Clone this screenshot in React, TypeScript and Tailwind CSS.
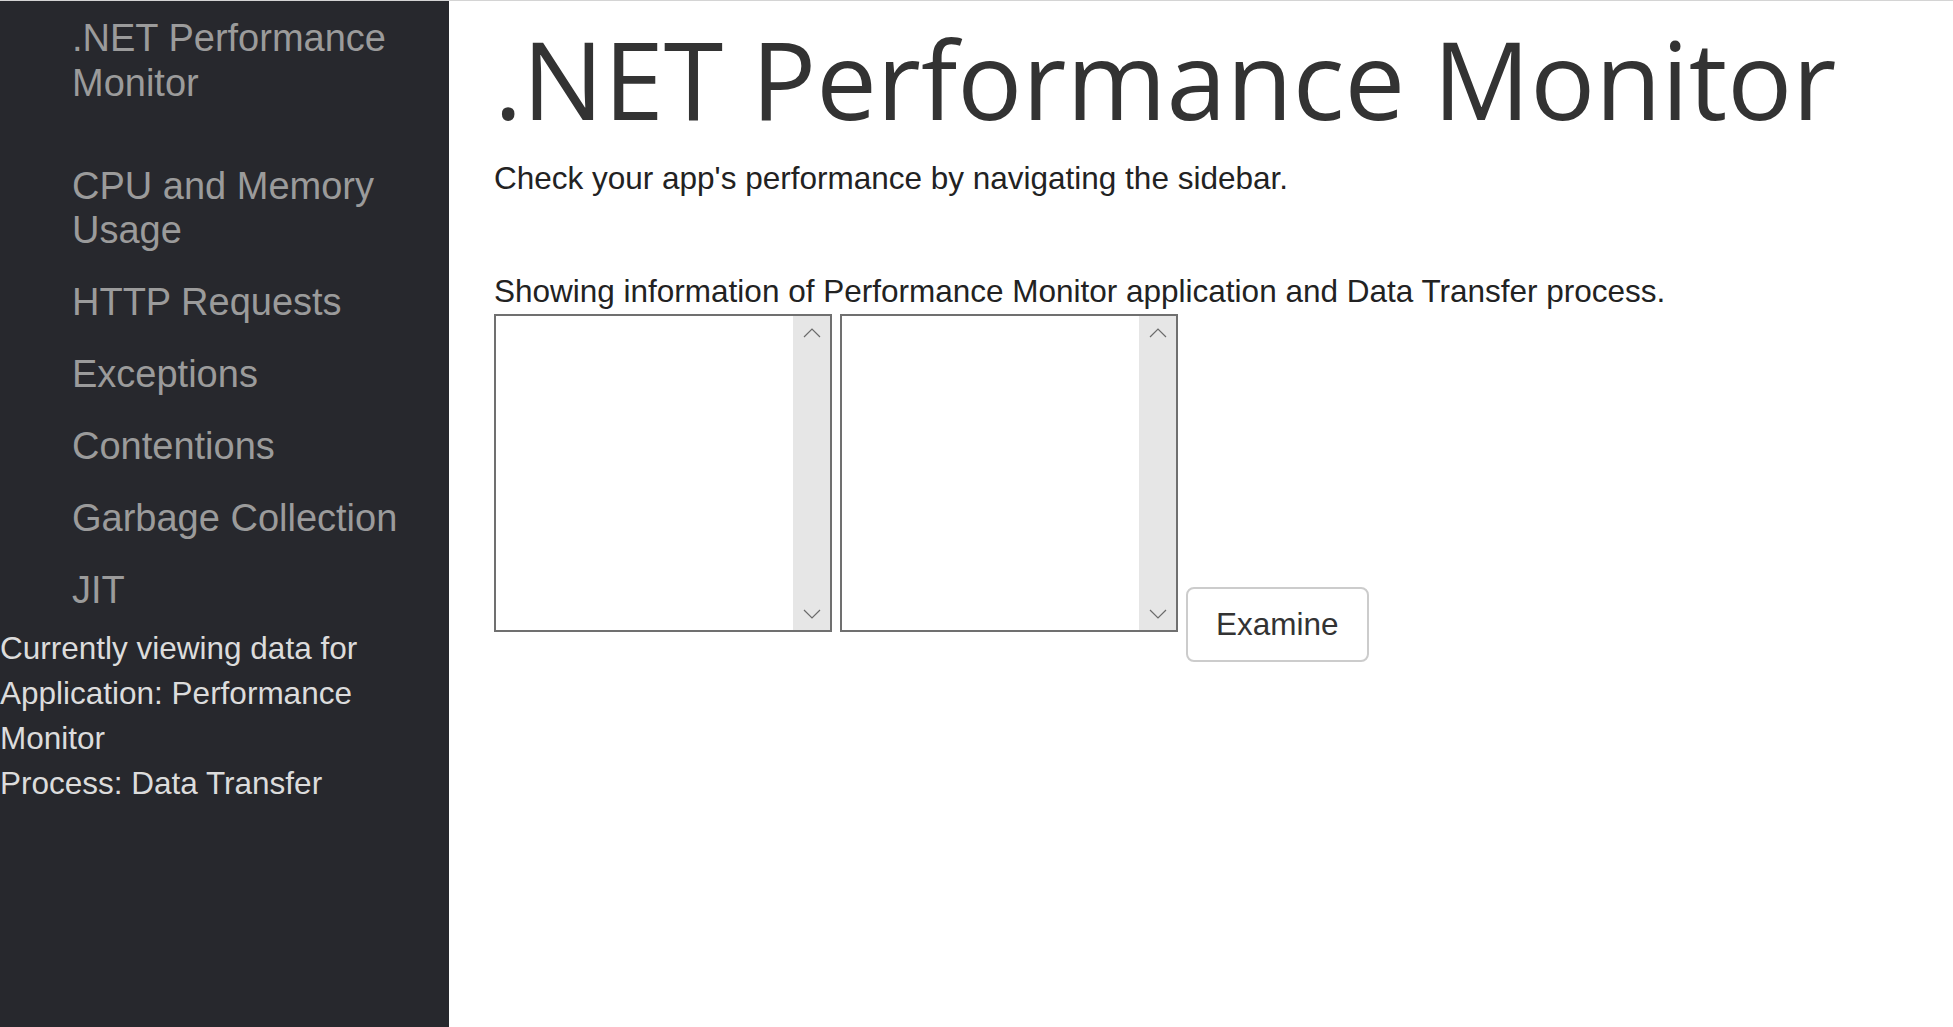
import React from 'react';

const NAV_ITEMS = [
  "CPU and Memory Usage",
  "HTTP Requests",
  "Exceptions",
  "Contentions",
  "Garbage Collection",
  "JIT"
];

const Chevron = ({ up }: { up?: boolean }) => (
  <svg width="18" height="10" viewBox="0 0 18 10" className="block">
    <path
      d={up ? "M1 9 L9 1 L17 9" : "M1 1 L9 9 L17 1"}
      fill="none"
      stroke="#6b6b6b"
      strokeWidth="1.2"
    />
  </svg>
);

const ListBox = () => (
  <div className="flex w-[338px] h-[318px] border-2 border-[#707070] bg-white">
    <div className="flex-1" />
    <div className="w-[37px] bg-[#e6e6e6] flex flex-col items-center justify-between pt-[12px] pb-[11px]">
      <Chevron up />
      <Chevron />
    </div>
  </div>
);

const App: React.FC = () => {
  return (
    <div className="flex min-h-[1027px] border-t border-[#d4d4d4] bg-white font-['Liberation_Sans',Arial,sans-serif]">
      <aside className="w-[449px] shrink-0 bg-[#27282d] pt-[15px]">
        <div className="pl-[72px] pr-[20px] text-[38px] leading-[45px] text-[#9b9b9b]">
          .NET Performance Monitor
        </div>
        <nav className="mt-[58px] pl-[72px] pr-[20px] flex flex-col gap-[28px]">
          {NAV_ITEMS.map((item) => (
            <a key={item} className="text-[38px] leading-[44px] text-[#9b9b9b] cursor-pointer">
              {item}
            </a>
          ))}
        </nav>
        <div className="mt-[14px] text-[31.5px] leading-[45px] text-[#dcdcdc]">
          <div>Currently viewing data for Application: Performance Monitor</div>
          <div>Process: Data Transfer</div>
        </div>
      </aside>

      <main className="flex-1 pl-[45px] pt-[18px] text-[#333333]">
        <h1 className="font-['Open_Sans',sans-serif] text-[108px] leading-[119px] text-[#333333]">
          .NET Performance Monitor
        </h1>
        <p className="mt-[18px] text-[31.5px] leading-[45px] text-[#222222]">
          Check your app's performance by navigating the sidebar.
        </p>
        <p className="mt-[68px] text-[31.5px] leading-[45px] text-[#222222]">
          Showing information of Performance Monitor application and Data Transfer process.
        </p>
        <div className="flex items-start gap-[8px]">
          <ListBox />
          <ListBox />
          <button className="mt-[273px] px-[28px] py-[13px] border-2 border-[#cccccc] rounded-[8px] bg-white text-[31.5px] leading-[45px] text-[#333333]">
            Examine
          </button>
        </div>
      </main>
    </div>
  );
};

export default App;
